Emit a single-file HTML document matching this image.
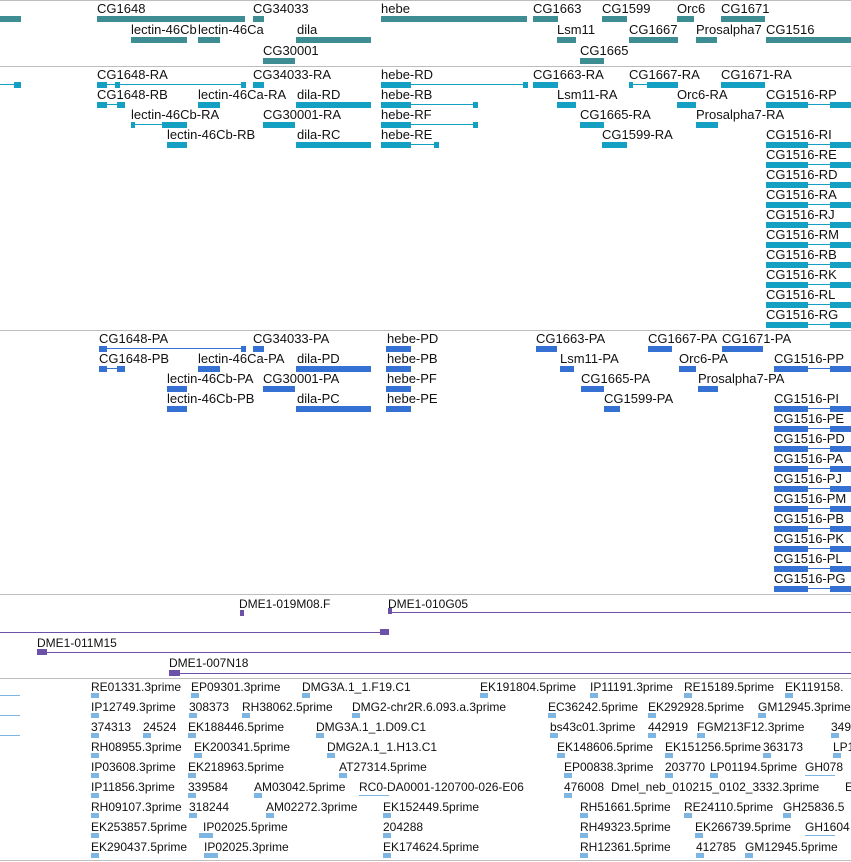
<!DOCTYPE html><html><head><meta charset="utf-8"><style>
body{margin:0;width:851px;height:862px;overflow:hidden;background:#fff;position:relative;font-family:"Liberation Sans","DejaVu Sans",sans-serif}
div{position:absolute}
.t{font-size:13px;color:#111;white-space:nowrap;line-height:14px}
.e{font-size:12px;color:#111;white-space:nowrap;line-height:14px}
.s{left:0;width:851px;height:1px;background:#bdbdbd}
.g{height:6px;background:#3e8d92}
.r{height:6px;background:#13a0c2}
.rl{height:1px;background:#13a0c2}
.p{height:6px;background:#3471d2}
.pl{height:1px;background:#3471d2}
.u{height:1px;background:#6b52a8}
.ub{height:6px;background:#6b52a8}
.m{height:5px;width:8px;background:#7db6e2}
</style></head><body>
<div class="s" style="top:0"></div>
<div class="s" style="top:66px"></div>
<div class="s" style="top:330px"></div>
<div class="s" style="top:594px"></div>
<div class="s" style="top:678px"></div>
<div class="s" style="top:860px"></div>

<!-- genes -->
<div class="t" style="left:97px;top:2px">CG1648</div>
<div class="t" style="left:253px;top:2px">CG34033</div>
<div class="t" style="left:381px;top:2px">hebe</div>
<div class="t" style="left:533px;top:2px">CG1663</div>
<div class="t" style="left:602px;top:2px">CG1599</div>
<div class="t" style="left:677px;top:2px">Orc6</div>
<div class="t" style="left:721px;top:2px">CG1671</div>
<div class="g" style="left:0;width:21px;top:16px"></div>
<div class="g" style="left:97px;width:148px;top:16px"></div>
<div class="g" style="left:253px;width:11px;top:16px"></div>
<div class="g" style="left:381px;width:146px;top:16px"></div>
<div class="g" style="left:533px;width:25px;top:16px"></div>
<div class="g" style="left:602px;width:25px;top:16px"></div>
<div class="g" style="left:677px;width:17px;top:16px"></div>
<div class="g" style="left:721px;width:44px;top:16px"></div>
<div class="t" style="left:131px;top:23px">lectin-46Cb</div>
<div class="t" style="left:198px;top:23px">lectin-46Ca</div>
<div class="t" style="left:297px;top:23px">dila</div>
<div class="t" style="left:557px;top:23px">Lsm11</div>
<div class="t" style="left:629px;top:23px">CG1667</div>
<div class="t" style="left:696px;top:23px">Prosalpha7</div>
<div class="t" style="left:766px;top:23px">CG1516</div>
<div class="g" style="left:131px;width:56px;top:37px"></div>
<div class="g" style="left:198px;width:22px;top:37px"></div>
<div class="g" style="left:296px;width:75px;top:37px"></div>
<div class="g" style="left:557px;width:19px;top:37px"></div>
<div class="g" style="left:629px;width:49px;top:37px"></div>
<div class="g" style="left:696px;width:21px;top:37px"></div>
<div class="g" style="left:766px;width:85px;top:37px"></div>
<div class="t" style="left:263px;top:44px">CG30001</div>
<div class="t" style="left:580px;top:44px">CG1665</div>
<div class="g" style="left:263px;width:32px;top:58px"></div>
<div class="g" style="left:580px;width:24px;top:58px"></div>

<!-- transcripts -->
<div class="t" style="left:97px;top:68px">CG1648-RA</div>
<div class="t" style="left:253px;top:68px">CG34033-RA</div>
<div class="t" style="left:381px;top:68px">hebe-RD</div>
<div class="t" style="left:533px;top:68px">CG1663-RA</div>
<div class="t" style="left:629px;top:68px">CG1667-RA</div>
<div class="t" style="left:721px;top:68px">CG1671-RA</div>
<div class="rl" style="left:0;width:20px;top:84px"></div><div class="r" style="left:14px;width:7px;top:82px"></div>
<div class="r" style="left:97px;width:10px;top:82px"></div><div class="rl" style="left:107px;width:138px;top:84px"></div><div class="r" style="left:115px;width:5px;top:82px"></div><div class="r" style="left:241px;width:5px;top:82px"></div>
<div class="r" style="left:253px;width:11px;top:82px"></div>
<div class="r" style="left:381px;width:30px;top:82px"></div><div class="rl" style="left:411px;width:116px;top:84px"></div><div class="r" style="left:523px;width:5px;top:82px"></div>
<div class="r" style="left:533px;width:25px;top:82px"></div>
<div class="rl" style="left:629px;width:49px;top:84px"></div><div class="r" style="left:647px;width:31px;top:82px"></div><div class="r" style="left:629px;width:4px;top:82px"></div>
<div class="r" style="left:721px;width:44px;top:82px"></div>

<div class="t" style="left:97px;top:88px">CG1648-RB</div>
<div class="t" style="left:198px;top:88px">lectin-46Ca-RA</div>
<div class="t" style="left:297px;top:88px">dila-RD</div>
<div class="t" style="left:381px;top:88px">hebe-RB</div>
<div class="t" style="left:557px;top:88px">Lsm11-RA</div>
<div class="t" style="left:677px;top:88px">Orc6-RA</div>
<div class="t" style="left:766px;top:88px">CG1516-RP</div>
<div class="r" style="left:97px;width:10px;top:102px"></div><div class="rl" style="left:107px;width:18px;top:104px"></div><div class="r" style="left:117px;width:8px;top:102px"></div>
<div class="r" style="left:198px;width:22px;top:102px"></div>
<div class="r" style="left:296px;width:75px;top:102px"></div>
<div class="r" style="left:381px;width:30px;top:102px"></div><div class="rl" style="left:411px;width:66px;top:104px"></div><div class="r" style="left:473px;width:5px;top:102px"></div>
<div class="r" style="left:557px;width:19px;top:102px"></div>
<div class="r" style="left:677px;width:19px;top:102px"></div>
<div class="r" style="left:766px;width:42px;top:102px"></div><div class="rl" style="left:808px;width:22px;top:104px"></div><div class="r" style="left:830px;width:21px;top:102px"></div>

<div class="t" style="left:131px;top:108px">lectin-46Cb-RA</div>
<div class="t" style="left:263px;top:108px">CG30001-RA</div>
<div class="t" style="left:381px;top:108px">hebe-RF</div>
<div class="t" style="left:580px;top:108px">CG1665-RA</div>
<div class="t" style="left:696px;top:108px">Prosalpha7-RA</div>
<div class="rl" style="left:131px;width:56px;top:124px"></div><div class="r" style="left:131px;width:4px;top:122px"></div><div class="r" style="left:162px;width:25px;top:122px"></div>
<div class="r" style="left:263px;width:32px;top:122px"></div>
<div class="r" style="left:381px;width:30px;top:122px"></div><div class="rl" style="left:411px;width:66px;top:124px"></div><div class="r" style="left:473px;width:5px;top:122px"></div>
<div class="r" style="left:580px;width:24px;top:122px"></div>
<div class="r" style="left:696px;width:22px;top:122px"></div>

<div class="t" style="left:167px;top:128px">lectin-46Cb-RB</div>
<div class="t" style="left:297px;top:128px">dila-RC</div>
<div class="t" style="left:381px;top:128px">hebe-RE</div>
<div class="t" style="left:602px;top:128px">CG1599-RA</div>
<div class="t" style="left:766px;top:128px">CG1516-RI</div>
<div class="r" style="left:167px;width:20px;top:142px"></div>
<div class="r" style="left:296px;width:75px;top:142px"></div>
<div class="r" style="left:381px;width:30px;top:142px"></div><div class="rl" style="left:411px;width:27px;top:144px"></div><div class="r" style="left:434px;width:5px;top:142px"></div>
<div class="r" style="left:602px;width:25px;top:142px"></div>
<div class="r" style="left:766px;width:42px;top:142px"></div><div class="rl" style="left:808px;width:22px;top:144px"></div><div class="r" style="left:830px;width:21px;top:142px"></div>

<div class="t" style="left:766px;top:148px">CG1516-RE</div>
<div class="r" style="left:766px;width:42px;top:162px"></div><div class="rl" style="left:808px;width:22px;top:164px"></div><div class="r" style="left:830px;width:21px;top:162px"></div>
<div class="t" style="left:766px;top:168px">CG1516-RD</div>
<div class="r" style="left:766px;width:42px;top:182px"></div><div class="rl" style="left:808px;width:22px;top:184px"></div><div class="r" style="left:830px;width:21px;top:182px"></div>
<div class="t" style="left:766px;top:188px">CG1516-RA</div>
<div class="r" style="left:766px;width:42px;top:202px"></div><div class="rl" style="left:808px;width:22px;top:204px"></div><div class="r" style="left:830px;width:21px;top:202px"></div>
<div class="t" style="left:766px;top:208px">CG1516-RJ</div>
<div class="r" style="left:766px;width:42px;top:222px"></div><div class="rl" style="left:808px;width:22px;top:224px"></div><div class="r" style="left:830px;width:21px;top:222px"></div>
<div class="t" style="left:766px;top:228px">CG1516-RM</div>
<div class="r" style="left:766px;width:42px;top:242px"></div><div class="rl" style="left:808px;width:22px;top:244px"></div><div class="r" style="left:830px;width:21px;top:242px"></div>
<div class="t" style="left:766px;top:248px">CG1516-RB</div>
<div class="r" style="left:766px;width:42px;top:262px"></div><div class="rl" style="left:808px;width:22px;top:264px"></div><div class="r" style="left:830px;width:21px;top:262px"></div>
<div class="t" style="left:766px;top:268px">CG1516-RK</div>
<div class="r" style="left:766px;width:42px;top:282px"></div><div class="rl" style="left:808px;width:22px;top:284px"></div><div class="r" style="left:830px;width:21px;top:282px"></div>
<div class="t" style="left:766px;top:288px">CG1516-RL</div>
<div class="r" style="left:766px;width:42px;top:302px"></div><div class="rl" style="left:808px;width:22px;top:304px"></div><div class="r" style="left:830px;width:21px;top:302px"></div>
<div class="t" style="left:766px;top:308px">CG1516-RG</div>
<div class="r" style="left:766px;width:42px;top:322px"></div><div class="rl" style="left:808px;width:22px;top:324px"></div><div class="r" style="left:830px;width:21px;top:322px"></div>

<!-- proteins -->
<div class="t" style="left:99px;top:332px">CG1648-PA</div>
<div class="t" style="left:253px;top:332px">CG34033-PA</div>
<div class="t" style="left:387px;top:332px">hebe-PD</div>
<div class="t" style="left:536px;top:332px">CG1663-PA</div>
<div class="t" style="left:648px;top:332px">CG1667-PA</div>
<div class="t" style="left:722px;top:332px">CG1671-PA</div>
<div class="p" style="left:99px;width:8px;top:346px"></div><div class="pl" style="left:107px;width:138px;top:348px"></div><div class="p" style="left:241px;width:5px;top:346px"></div>
<div class="p" style="left:253px;width:11px;top:346px"></div>
<div class="p" style="left:386px;width:25px;top:346px"></div>
<div class="p" style="left:536px;width:21px;top:346px"></div>
<div class="p" style="left:648px;width:24px;top:346px"></div>
<div class="p" style="left:722px;width:41px;top:346px"></div>

<div class="t" style="left:99px;top:352px">CG1648-PB</div>
<div class="t" style="left:198px;top:352px">lectin-46Ca-PA</div>
<div class="t" style="left:297px;top:352px">dila-PD</div>
<div class="t" style="left:387px;top:352px">hebe-PB</div>
<div class="t" style="left:560px;top:352px">Lsm11-PA</div>
<div class="t" style="left:679px;top:352px">Orc6-PA</div>
<div class="t" style="left:774px;top:352px">CG1516-PP</div>
<div class="p" style="left:99px;width:8px;top:366px"></div><div class="pl" style="left:107px;width:18px;top:368px"></div><div class="p" style="left:117px;width:8px;top:366px"></div>
<div class="p" style="left:198px;width:22px;top:366px"></div>
<div class="p" style="left:296px;width:75px;top:366px"></div>
<div class="p" style="left:386px;width:25px;top:366px"></div>
<div class="p" style="left:560px;width:14px;top:366px"></div>
<div class="p" style="left:679px;width:17px;top:366px"></div>
<div class="p" style="left:774px;width:34px;top:366px"></div><div class="pl" style="left:808px;width:22px;top:368px"></div><div class="p" style="left:830px;width:21px;top:366px"></div>

<div class="t" style="left:167px;top:372px">lectin-46Cb-PA</div>
<div class="t" style="left:263px;top:372px">CG30001-PA</div>
<div class="t" style="left:387px;top:372px">hebe-PF</div>
<div class="t" style="left:581px;top:372px">CG1665-PA</div>
<div class="t" style="left:698px;top:372px">Prosalpha7-PA</div>
<div class="p" style="left:167px;width:20px;top:386px"></div>
<div class="p" style="left:263px;width:32px;top:386px"></div>
<div class="p" style="left:386px;width:25px;top:386px"></div>
<div class="p" style="left:581px;width:23px;top:386px"></div>
<div class="p" style="left:698px;width:20px;top:386px"></div>

<div class="t" style="left:167px;top:392px">lectin-46Cb-PB</div>
<div class="t" style="left:297px;top:392px">dila-PC</div>
<div class="t" style="left:387px;top:392px">hebe-PE</div>
<div class="t" style="left:604px;top:392px">CG1599-PA</div>
<div class="t" style="left:774px;top:392px">CG1516-PI</div>
<div class="p" style="left:167px;width:20px;top:406px"></div>
<div class="p" style="left:296px;width:75px;top:406px"></div>
<div class="p" style="left:386px;width:25px;top:406px"></div>
<div class="p" style="left:604px;width:16px;top:406px"></div>
<div class="p" style="left:774px;width:34px;top:406px"></div><div class="pl" style="left:808px;width:22px;top:408px"></div><div class="p" style="left:830px;width:21px;top:406px"></div>

<div class="t" style="left:774px;top:412px">CG1516-PE</div>
<div class="p" style="left:774px;width:34px;top:426px"></div><div class="pl" style="left:808px;width:22px;top:428px"></div><div class="p" style="left:830px;width:21px;top:426px"></div>
<div class="t" style="left:774px;top:432px">CG1516-PD</div>
<div class="p" style="left:774px;width:34px;top:446px"></div><div class="pl" style="left:808px;width:22px;top:448px"></div><div class="p" style="left:830px;width:21px;top:446px"></div>
<div class="t" style="left:774px;top:452px">CG1516-PA</div>
<div class="p" style="left:774px;width:34px;top:466px"></div><div class="pl" style="left:808px;width:22px;top:468px"></div><div class="p" style="left:830px;width:21px;top:466px"></div>
<div class="t" style="left:774px;top:472px">CG1516-PJ</div>
<div class="p" style="left:774px;width:34px;top:486px"></div><div class="pl" style="left:808px;width:22px;top:488px"></div><div class="p" style="left:830px;width:21px;top:486px"></div>
<div class="t" style="left:774px;top:492px">CG1516-PM</div>
<div class="p" style="left:774px;width:34px;top:506px"></div><div class="pl" style="left:808px;width:22px;top:508px"></div><div class="p" style="left:830px;width:21px;top:506px"></div>
<div class="t" style="left:774px;top:512px">CG1516-PB</div>
<div class="p" style="left:774px;width:34px;top:526px"></div><div class="pl" style="left:808px;width:22px;top:528px"></div><div class="p" style="left:830px;width:21px;top:526px"></div>
<div class="t" style="left:774px;top:532px">CG1516-PK</div>
<div class="p" style="left:774px;width:34px;top:546px"></div><div class="pl" style="left:808px;width:22px;top:548px"></div><div class="p" style="left:830px;width:21px;top:546px"></div>
<div class="t" style="left:774px;top:552px">CG1516-PL</div>
<div class="p" style="left:774px;width:34px;top:566px"></div><div class="pl" style="left:808px;width:22px;top:568px"></div><div class="p" style="left:830px;width:21px;top:566px"></div>
<div class="t" style="left:774px;top:572px">CG1516-PG</div>
<div class="p" style="left:774px;width:34px;top:586px"></div><div class="pl" style="left:808px;width:22px;top:588px"></div><div class="p" style="left:830px;width:21px;top:586px"></div>

<!-- clones -->
<div class="e" style="left:239px;top:597px">DME1-019M08.F</div>
<div class="e" style="left:388px;top:597px">DME1-010G05</div>
<div class="ub" style="left:240px;width:4px;top:610px"></div>
<div class="ub" style="left:388px;width:4px;top:608px"></div><div class="u" style="left:388px;width:463px;top:612px"></div>
<div class="u" style="left:0;width:389px;top:632px"></div><div class="ub" style="left:380px;width:9px;top:629px"></div>
<div class="e" style="left:37px;top:636px">DME1-011M15</div>
<div class="ub" style="left:37px;width:10px;top:649px"></div><div class="u" style="left:37px;width:814px;top:652px"></div>
<div class="e" style="left:169px;top:656px">DME1-007N18</div>
<div class="ub" style="left:169px;width:11px;top:670px"></div><div class="u" style="left:169px;width:682px;top:673px"></div>

<!-- ESTs -->
<div class="rl" style="left:0;width:20px;top:695px;background:#7db6e2"></div>
<div class="rl" style="left:0;width:20px;top:715px;background:#7db6e2"></div>
<div class="rl" style="left:0;width:20px;top:735px;background:#7db6e2"></div>

<div class="e" style="left:91px;top:680px">RE01331.3prime</div><div class="m" style="left:91px;top:693px"></div>
<div class="e" style="left:191px;top:680px">EP09301.3prime</div><div class="m" style="left:191px;top:693px"></div>
<div class="e" style="left:302px;top:680px">DMG3A.1_1.F19.C1</div><div class="m" style="left:302px;top:693px"></div>
<div class="e" style="left:480px;top:680px">EK191804.5prime</div><div class="m" style="left:480px;top:693px"></div>
<div class="e" style="left:590px;top:680px">IP11191.3prime</div><div class="m" style="left:590px;top:693px"></div>
<div class="e" style="left:684px;top:680px">RE15189.5prime</div><div class="m" style="left:684px;top:693px"></div>
<div class="e" style="left:785px;top:680px">EK119158.</div><div class="m" style="left:785px;top:693px"></div>

<div class="e" style="left:91px;top:700px">IP12749.3prime</div><div class="m" style="left:91px;top:713px"></div>
<div class="e" style="left:189px;top:700px">308373</div><div class="m" style="left:189px;top:713px"></div>
<div class="e" style="left:242px;top:700px">RH38062.5prime</div><div class="m" style="left:242px;top:713px"></div>
<div class="e" style="left:352px;top:700px">DMG2-chr2R.6.093.a.3prime</div><div class="m" style="left:352px;top:713px"></div>
<div class="e" style="left:548px;top:700px">EC36242.5prime</div><div class="m" style="left:548px;top:713px"></div>
<div class="e" style="left:648px;top:700px">EK292928.5prime</div><div class="m" style="left:648px;top:713px"></div>
<div class="e" style="left:758px;top:700px">GM12945.3prime</div><div class="m" style="left:758px;top:713px"></div>

<div class="e" style="left:91px;top:720px">374313</div><div class="m" style="left:91px;top:733px"></div>
<div class="e" style="left:143px;top:720px">24524</div><div class="m" style="left:143px;top:733px"></div>
<div class="e" style="left:188px;top:720px">EK188446.5prime</div><div class="m" style="left:188px;top:733px"></div>
<div class="e" style="left:316px;top:720px">DMG3A.1_1.D09.C1</div><div class="m" style="left:316px;top:733px"></div>
<div class="e" style="left:550px;top:720px">bs43c01.3prime</div><div class="m" style="left:550px;top:733px"></div>
<div class="e" style="left:648px;top:720px">442919</div><div class="m" style="left:648px;top:733px"></div>
<div class="e" style="left:697px;top:720px">FGM213F12.3prime</div><div class="m" style="left:697px;top:733px"></div>
<div class="e" style="left:831px;top:720px">349</div><div class="m" style="left:831px;top:733px"></div>

<div class="e" style="left:91px;top:740px">RH08955.3prime</div><div class="m" style="left:91px;top:753px"></div>
<div class="e" style="left:194px;top:740px">EK200341.5prime</div><div class="m" style="left:194px;top:753px"></div>
<div class="e" style="left:327px;top:740px">DMG2A.1_1.H13.C1</div><div class="m" style="left:327px;top:753px"></div>
<div class="e" style="left:557px;top:740px">EK148606.5prime</div><div class="m" style="left:557px;top:753px"></div>
<div class="e" style="left:665px;top:740px">EK151256.5prime</div><div class="m" style="left:665px;top:753px"></div>
<div class="e" style="left:763px;top:740px">363173</div><div class="m" style="left:763px;top:753px"></div>
<div class="e" style="left:833px;top:740px">LP1</div><div class="m" style="left:833px;top:753px"></div>

<div class="e" style="left:91px;top:760px">IP03608.3prime</div><div class="m" style="left:91px;top:773px"></div>
<div class="e" style="left:188px;top:760px">EK218963.5prime</div><div class="m" style="left:188px;top:773px"></div>
<div class="e" style="left:339px;top:760px">AT27314.5prime</div><div class="m" style="left:339px;top:773px"></div>
<div class="e" style="left:564px;top:760px">EP00838.3prime</div><div class="m" style="left:564px;top:773px"></div>
<div class="e" style="left:665px;top:760px">203770</div><div class="m" style="left:665px;top:773px"></div>
<div class="e" style="left:710px;top:760px">LP01194.5prime</div><div class="m" style="left:710px;top:773px"></div>
<div class="e" style="left:805px;top:760px">GH078</div><div class="m" style="left:805px;top:773px;width:30px;height:1px;top:775px"></div>

<div class="e" style="left:91px;top:780px">IP11856.3prime</div><div class="m" style="left:91px;top:793px"></div>
<div class="e" style="left:188px;top:780px">339584</div><div class="m" style="left:188px;top:793px"></div>
<div class="e" style="left:254px;top:780px">AM03042.5prime</div><div class="m" style="left:254px;top:793px"></div>
<div class="e" style="left:359px;top:780px">RC0-DA0001-120700-026-E06</div><div class="m" style="left:359px;top:795px;width:30px;height:1px"></div>
<div class="e" style="left:564px;top:780px">476008</div><div class="m" style="left:564px;top:793px"></div>
<div class="e" style="left:611px;top:780px">Dmel_neb_010215_0102_3332.3prime</div>
<div class="e" style="left:845px;top:780px">E</div>

<div class="e" style="left:91px;top:800px">RH09107.3prime</div><div class="m" style="left:91px;top:813px"></div>
<div class="e" style="left:189px;top:800px">318244</div><div class="m" style="left:189px;top:813px"></div>
<div class="e" style="left:266px;top:800px">AM02272.3prime</div><div class="m" style="left:266px;top:813px"></div>
<div class="e" style="left:383px;top:800px">EK152449.5prime</div><div class="m" style="left:383px;top:813px"></div>
<div class="e" style="left:580px;top:800px">RH51661.5prime</div><div class="m" style="left:580px;top:813px"></div>
<div class="e" style="left:684px;top:800px">RE24110.5prime</div><div class="m" style="left:684px;top:813px"></div>
<div class="e" style="left:783px;top:800px">GH25836.5</div><div class="m" style="left:783px;top:813px"></div>

<div class="e" style="left:91px;top:820px">EK253857.5prime</div><div class="m" style="left:91px;top:833px"></div>
<div class="e" style="left:203px;top:820px">IP02025.5prime</div><div class="m" style="left:199px;top:833px;width:14px"></div>
<div class="e" style="left:383px;top:820px">204288</div><div class="m" style="left:383px;top:833px"></div>
<div class="e" style="left:580px;top:820px">RH49323.5prime</div><div class="m" style="left:580px;top:833px"></div>
<div class="e" style="left:695px;top:820px">EK266739.5prime</div><div class="m" style="left:695px;top:833px"></div>
<div class="e" style="left:805px;top:820px">GH1604</div><div class="m" style="left:805px;top:835px;width:30px;height:1px"></div>

<div class="e" style="left:91px;top:840px">EK290437.5prime</div><div class="m" style="left:91px;top:853px"></div>
<div class="e" style="left:204px;top:840px">IP02025.3prime</div><div class="m" style="left:204px;top:853px;width:14px"></div>
<div class="e" style="left:383px;top:840px">EK174624.5prime</div><div class="m" style="left:383px;top:853px"></div>
<div class="e" style="left:580px;top:840px">RH12361.5prime</div><div class="m" style="left:580px;top:853px"></div>
<div class="e" style="left:696px;top:840px">412785</div><div class="m" style="left:696px;top:853px"></div>
<div class="e" style="left:745px;top:840px">GM12945.5prime</div><div class="m" style="left:745px;top:853px"></div>
</body></html>
